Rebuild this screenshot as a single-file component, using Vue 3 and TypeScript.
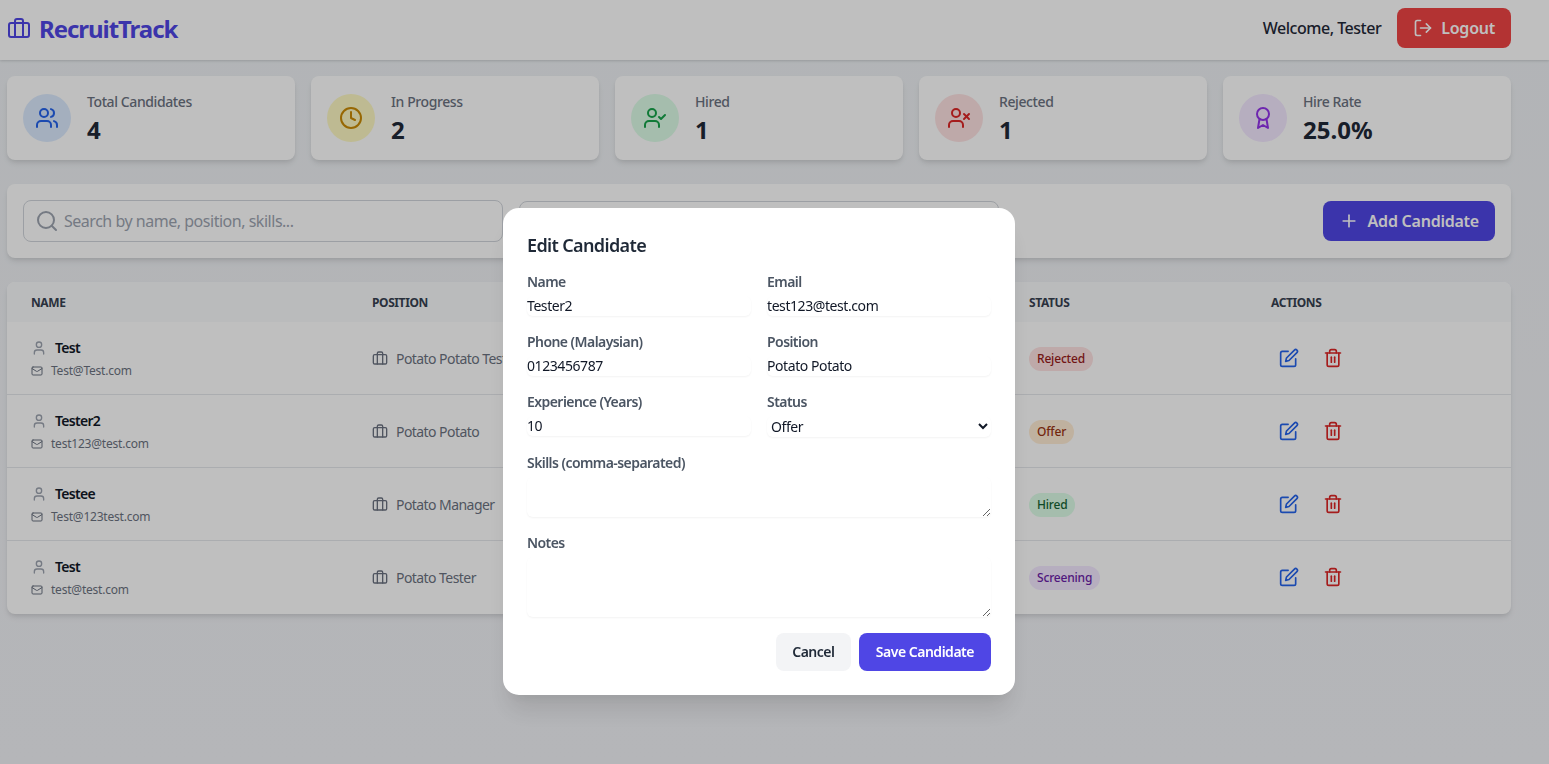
<template>
  <div class="app">
    <header class="navbar">
      <div class="brand">
        <svg class="icon icon-24" viewBox="0 0 24 24" v-html="icons.briefcase"></svg>
        <span class="brand-name">RecruitTrack</span>
      </div>
      <div class="nav-right">
        <span class="welcome">Welcome, Tester</span>
        <button class="logout-btn" type="button">
          <svg class="icon icon-20" viewBox="0 0 24 24" v-html="icons.logout"></svg>
          Logout
        </button>
      </div>
    </header>

    <main class="content">
      <section class="stats">
        <div v-for="stat in stats" :key="stat.label" class="stat-card">
          <div class="stat-icon" :class="stat.tone">
            <svg class="icon icon-24" viewBox="0 0 24 24" v-html="icons[stat.icon]"></svg>
          </div>
          <div class="stat-text">
            <p class="stat-label">{{ stat.label }}</p>
            <p class="stat-value">{{ stat.value }}</p>
          </div>
        </div>
      </section>

      <section class="filters">
        <div class="search-box">
          <svg class="icon icon-24 search-icon" viewBox="0 0 24 24" v-html="icons.search"></svg>
          <input class="search-input" type="text" placeholder="Search by name, position, skills..." />
        </div>
        <select class="status-filter">
          <option>All Statuses</option>
        </select>
        <button class="add-btn" type="button">
          <svg class="icon icon-20" viewBox="0 0 24 24" v-html="icons.plus"></svg>
          Add Candidate
        </button>
      </section>

      <section class="table-card">
        <div class="table-row table-head">
          <div>Name</div>
          <div>Position</div>
          <div>Status</div>
          <div>Actions</div>
        </div>
        <div v-for="person in candidates" :key="person.email" class="table-row table-body">
          <div>
            <div class="person-name">
              <svg class="icon icon-16 faint" viewBox="0 0 24 24" v-html="icons.user"></svg>
              {{ person.name }}
            </div>
            <div class="person-email">
              <svg class="icon icon-12 muted" viewBox="0 0 24 24" v-html="icons.mail"></svg>
              {{ person.email }}
            </div>
          </div>
          <div class="person-position">
            <svg class="icon icon-16 muted" viewBox="0 0 24 24" v-html="icons.briefcase"></svg>
            {{ person.position }}
          </div>
          <div>
            <span class="badge" :class="person.status.toLowerCase()">{{ person.status }}</span>
          </div>
          <div class="actions">
            <button class="icon-btn edit" type="button">
              <svg class="icon icon-20" viewBox="0 0 24 24" v-html="icons.edit"></svg>
            </button>
            <button class="icon-btn delete" type="button">
              <svg class="icon icon-20" viewBox="0 0 24 24" v-html="icons.trash"></svg>
            </button>
          </div>
        </div>
      </section>
    </main>

    <div class="overlay">
      <form class="modal" @submit.prevent>
        <h2 class="modal-title">Edit Candidate</h2>
        <div class="form-grid">
          <label class="field">
            <span class="field-label">Name</span>
            <input class="field-input" type="text" value="Tester2" />
          </label>
          <label class="field">
            <span class="field-label">Email</span>
            <input class="field-input" type="email" value="test123@test.com" />
          </label>
          <label class="field">
            <span class="field-label">Phone (Malaysian)</span>
            <input class="field-input" type="text" value="0123456787" />
          </label>
          <label class="field">
            <span class="field-label">Position</span>
            <input class="field-input" type="text" value="Potato Potato" />
          </label>
          <label class="field">
            <span class="field-label">Experience (Years)</span>
            <input class="field-input" type="text" value="10" />
          </label>
          <label class="field">
            <span class="field-label">Status</span>
            <select class="field-input field-select">
              <option>Offer</option>
              <option>Hired</option>
              <option>Rejected</option>
              <option>Screening</option>
            </select>
          </label>
        </div>
        <label class="field block-field">
          <span class="field-label">Skills (comma-separated)</span>
          <textarea class="field-input skills"></textarea>
        </label>
        <label class="field block-field">
          <span class="field-label">Notes</span>
          <textarea class="field-input notes"></textarea>
        </label>
        <div class="modal-actions">
          <button class="cancel-btn" type="button">Cancel</button>
          <button class="save-btn" type="submit">Save Candidate</button>
        </div>
      </form>
    </div>
  </div>
</template>

<script setup lang="ts">
const icons: Record<string, string> = {
  briefcase: '<rect x="2" y="7" width="20" height="14" rx="2" ry="2"/><path d="M16 21V5a2 2 0 0 0-2-2h-4a2 2 0 0 0-2 2v16"/>',
  logout: '<path d="M9 21H5a2 2 0 0 1-2-2V5a2 2 0 0 1 2-2h4"/><polyline points="16 17 21 12 16 7"/><line x1="21" y1="12" x2="9" y2="12"/>',
  users: '<path d="M16 21v-2a4 4 0 0 0-4-4H6a4 4 0 0 0-4 4v2"/><circle cx="9" cy="7" r="4"/><path d="M22 21v-2a4 4 0 0 0-3-3.87"/><path d="M16 3.13a4 4 0 0 1 0 7.75"/>',
  clock: '<circle cx="12" cy="12" r="10"/><polyline points="12 6 12 12 16 14"/>',
  userCheck: '<path d="M16 21v-2a4 4 0 0 0-4-4H6a4 4 0 0 0-4 4v2"/><circle cx="9" cy="7" r="4"/><polyline points="16 11 18 13 22 9"/>',
  userX: '<path d="M16 21v-2a4 4 0 0 0-4-4H6a4 4 0 0 0-4 4v2"/><circle cx="9" cy="7" r="4"/><line x1="17" y1="8" x2="22" y2="13"/><line x1="22" y1="8" x2="17" y2="13"/>',
  award: '<circle cx="12" cy="8" r="6"/><path d="M15.477 12.89 17 22l-5-3-5 3 1.523-9.11"/>',
  search: '<circle cx="11" cy="11" r="8"/><path d="m21 21-4.3-4.3"/>',
  plus: '<path d="M5 12h14"/><path d="M12 5v14"/>',
  user: '<path d="M19 21v-2a4 4 0 0 0-4-4H9a4 4 0 0 0-4 4v2"/><circle cx="12" cy="7" r="4"/>',
  mail: '<rect x="2" y="4" width="20" height="16" rx="2"/><path d="m22 7-8.97 5.7a1.94 1.94 0 0 1-2.06 0L2 7"/>',
  edit: '<path d="M11 4H4a2 2 0 0 0-2 2v14a2 2 0 0 0 2 2h14a2 2 0 0 0 2-2v-7"/><path d="M18.5 2.5a2.121 2.121 0 0 1 3 3L12 15l-4 1 1-4 9.5-9.5z"/>',
  trash: '<path d="M3 6h18"/><path d="M19 6v14c0 1-1 2-2 2H7c-1 0-2-1-2-2V6"/><path d="M8 6V4c0-1 1-2 2-2h4c1 0 2 1 2 2v2"/><line x1="10" y1="11" x2="10" y2="17"/><line x1="14" y1="11" x2="14" y2="17"/>',
}

const stats = [
  { label: 'Total Candidates', value: '4', icon: 'users', tone: 'blue' },
  { label: 'In Progress', value: '2', icon: 'clock', tone: 'yellow' },
  { label: 'Hired', value: '1', icon: 'userCheck', tone: 'green' },
  { label: 'Rejected', value: '1', icon: 'userX', tone: 'red' },
  { label: 'Hire Rate', value: '25.0%', icon: 'award', tone: 'purple' },
]

const candidates = [
  { name: 'Test', email: 'Test@Test.com', position: 'Potato Potato Tester', status: 'Rejected' },
  { name: 'Tester2', email: 'test123@test.com', position: 'Potato Potato', status: 'Offer' },
  { name: 'Testee', email: 'Test@123test.com', position: 'Potato Manager', status: 'Hired' },
  { name: 'Test', email: 'test@test.com', position: 'Potato Tester', status: 'Screening' },
]
</script>

<style>
body {
  margin: 0;
  background: #f3f4f6;
}
</style>

<style scoped>
.app {
  min-height: 100vh;
  font-family: "Noto Sans", "Open Sans", sans-serif;
  letter-spacing: -0.025em;
  color: #111827;
  background: linear-gradient(180deg, #eef1f4 0%, #f2f3f7 100%);
}
.icon {
  fill: none;
  stroke: currentColor;
  stroke-width: 2;
  stroke-linecap: round;
  stroke-linejoin: round;
  flex-shrink: 0;
}
.icon-12 { width: 12px; height: 12px; }
.icon-16 { width: 16px; height: 16px; }
.icon-20 { width: 20px; height: 20px; }
.icon-24 { width: 24px; height: 24px; }
.muted { color: #6b7280; }
.faint { color: #9ca3af; }

.navbar {
  height: 60px;
  box-sizing: border-box;
  padding: 0 38px 4px 7px;
  display: flex;
  align-items: center;
  justify-content: space-between;
  background: #fff;
  box-shadow: 0 1px 3px rgba(0, 0, 0, 0.1), 0 1px 2px rgba(0, 0, 0, 0.06);
}
.brand {
  display: flex;
  align-items: center;
  gap: 8px;
  color: #4f46e5;
}
.brand-name {
  font-size: 24px;
  font-weight: 700;
  letter-spacing: -1.05px;
}
.nav-right {
  display: flex;
  align-items: center;
  gap: 16px;
}
.welcome {
  font-size: 16px;
  font-weight: 500;
  letter-spacing: -0.03em;
  color: #1f2937;
}
.logout-btn {
  display: flex;
  align-items: center;
  gap: 8px;
  height: 40px;
  padding: 0 16px;
  border: 0;
  border-radius: 8px;
  background: #ef4444;
  color: #fff;
  font: 600 16px "Noto Sans", sans-serif;
  letter-spacing: -0.015em;
}

.content {
  width: 1504px;
  margin-left: 7px;
  padding-top: 16px;
}
.stats {
  display: grid;
  grid-template-columns: repeat(5, 1fr);
  gap: 16px;
}
.stat-card {
  height: 84px;
  box-sizing: border-box;
  padding: 0 16px;
  display: flex;
  align-items: center;
  gap: 16px;
  background: #fff;
  border-radius: 8px;
  box-shadow: 0 4px 6px -1px rgba(0, 0, 0, 0.1), 0 2px 4px -1px rgba(0, 0, 0, 0.06);
}
.stat-icon {
  width: 48px;
  height: 48px;
  display: flex;
  align-items: center;
  justify-content: center;
  border-radius: 50%;
}
.stat-icon.blue { background: #dbeafe; color: #2563eb; }
.stat-icon.yellow { background: #fef9c3; color: #ca8a04; }
.stat-icon.green { background: #dcfce7; color: #16a34a; }
.stat-icon.red { background: #fee2e2; color: #dc2626; }
.stat-icon.purple { background: #f3e8ff; color: #9333ea; }
.stat-text {
  padding-top: 2px;
}
.stat-label {
  margin: 0;
  font-size: 14px;
  line-height: 20px;
  font-weight: 500;
  color: #6b7280;
}
.stat-value {
  margin: 2px 0 0;
  font-size: 24px;
  line-height: 32px;
  font-weight: 700;
  letter-spacing: 0;
  color: #1f2937;
}

.filters {
  margin-top: 24px;
  height: 74px;
  box-sizing: border-box;
  padding: 0 16px;
  display: flex;
  align-items: center;
  gap: 16px;
  background: #fff;
  border-radius: 8px;
  box-shadow: 0 4px 6px -1px rgba(0, 0, 0, 0.1), 0 2px 4px -1px rgba(0, 0, 0, 0.06);
}
.search-box {
  position: relative;
  width: 480px;
}
.search-icon {
  position: absolute;
  left: 12px;
  top: 9px;
  color: #9ca3af;
}
.search-input {
  width: 100%;
  height: 42px;
  box-sizing: border-box;
  padding: 0 12px 0 40px;
  border: 1px solid #d1d5db;
  border-radius: 8px;
  background: #fff;
  font: 16px "Noto Sans", sans-serif;
  letter-spacing: -0.03em;
}
.search-input::placeholder {
  color: #9ca3af;
}
.status-filter {
  width: 480px;
  height: 40px;
  border: 1px solid #d1d5db;
  border-radius: 8px;
  background: #fff;
  padding: 0 12px;
  font: 16px "Noto Sans", sans-serif;
}
.add-btn {
  margin-left: auto;
  display: flex;
  align-items: center;
  gap: 9px;
  height: 40px;
  padding: 0 16px;
  border: 0;
  border-radius: 8px;
  background: #4f46e5;
  color: #fff;
  font: 600 16px "Noto Sans", sans-serif;
  letter-spacing: -0.015em;
}

.table-card {
  margin-top: 24px;
  background: #fff;
  border-radius: 8px;
  overflow: hidden;
  box-shadow: 0 4px 6px -1px rgba(0, 0, 0, 0.1), 0 2px 4px -1px rgba(0, 0, 0, 0.06);
}
.table-row {
  display: grid;
  grid-template-columns: 341px 657px 242px 1fr;
  align-items: center;
}
.table-row > div {
  padding-left: 24px;
}
.table-head {
  height: 40px;
  background: #f9fafb;
  font-size: 12px;
  font-weight: 700;
  text-transform: uppercase;
  color: #374151;
}
.table-body {
  height: 73px;
  box-sizing: border-box;
  border-bottom: 1px solid #e5e7eb;
}
.table-body:last-child {
  border-bottom-color: transparent;
}
.person-name {
  display: flex;
  align-items: center;
  gap: 8px;
  font-size: 14px;
  line-height: 20px;
  font-weight: 600;
  letter-spacing: -0.05em;
  color: #111827;
}
.person-email {
  margin-top: 5px;
  display: flex;
  align-items: center;
  gap: 8px;
  font-size: 12px;
  line-height: 16px;
  letter-spacing: -0.018em;
  color: #6b7280;
}
.person-position {
  display: flex;
  align-items: center;
  gap: 8px;
  font-size: 14px;
  letter-spacing: -0.04em;
  color: #6b7280;
  white-space: nowrap;
}
.badge {
  display: inline-block;
  padding: 0 8px;
  border-radius: 999px;
  font-size: 12px;
  line-height: 24px;
  font-weight: 500;
  letter-spacing: -0.015em;
}
.badge.rejected { background: #fee2e2; color: #991b1b; }
.badge.offer { background: #ffedd5; color: #9a3412; }
.badge.hired { background: #dcfce7; color: #166534; }
.badge.screening { background: #f3e8ff; color: #6b21a8; }
.actions {
  display: flex;
  gap: 8px;
}
.icon-btn {
  display: flex;
  padding: 8px;
  border: 0;
  background: none;
}
.icon-btn.edit { color: #2563eb; }
.icon-btn.delete { color: #dc2626; }

.overlay {
  position: fixed;
  inset: 0;
  padding: 208px 0 0 503px;
  background: rgba(0, 0, 0, 0.25);
}
.modal {
  width: 512px;
  height: 487px;
  box-sizing: border-box;
  padding: 24px;
  background: #fff;
  border-radius: 16px;
  box-shadow: 0 20px 25px -5px rgba(0, 0, 0, 0.1), 0 10px 10px -5px rgba(0, 0, 0, 0.04);
}
.modal-title {
  margin: 0 0 12px;
  padding-bottom: 2px;
  height: 26px;
  font-size: 18px;
  line-height: 26px;
  font-weight: 600;
  letter-spacing: -0.035em;
  color: #1f2937;
}
.form-grid {
  display: grid;
  grid-template-columns: 1fr 1fr;
  gap: 16px;
}
.field {
  display: block;
}
.block-field {
  margin-top: 16px;
}
.field-label {
  display: block;
  margin-bottom: 4px;
  font-size: 14px;
  line-height: 20px;
  font-weight: 600;
  letter-spacing: -0.04em;
  color: #4b5563;
}
.field-input {
  display: block;
  width: 100%;
  box-sizing: border-box;
  height: 20px;
  padding: 0 0 2px;
  border: 0;
  border-radius: 6px;
  outline: 0;
  background: #fff;
  box-shadow: 0 1px 2px rgba(0, 0, 0, 0.05);
  font: 14px "Noto Sans", sans-serif;
  letter-spacing: -0.03em;
  color: #111827;
}
.field-select {
  height: 21px;
  padding: 0;
}
.skills { height: 40px; }
.notes { height: 60px; }
.modal-actions {
  margin-top: 16px;
  display: flex;
  justify-content: flex-end;
  gap: 8px;
}
.cancel-btn,
.save-btn {
  height: 38px;
  padding: 0 17px 2px;
  border: 0;
  border-radius: 8px;
  font: 600 14px "Noto Sans", sans-serif;
  letter-spacing: -0.035em;
}
.cancel-btn {
  width: 75px;
  padding-left: 0;
  padding-right: 0;
  background: #f3f4f6;
  color: #1f2937;
}
.save-btn {
  background: #4f46e5;
  color: #fff;
}
</style>
